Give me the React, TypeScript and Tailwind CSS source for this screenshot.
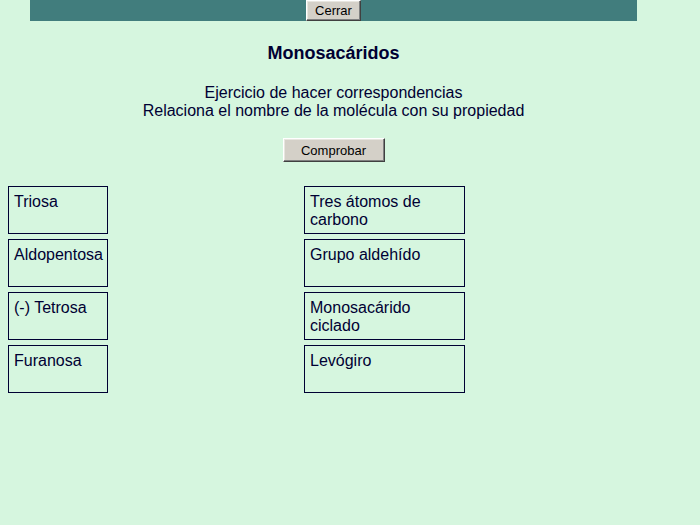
import React from "react";

const pairs: [string, string][] = [
  ["Triosa", "Tres átomos de carbono"],
  ["Aldopentosa", "Grupo aldehído"],
  ["(-) Tetrosa", "Monosacárido ciclado"],
  ["Furanosa", "Levógiro"],
];

const btn =
  "bg-[#d4d0c8] text-black text-[13px] leading-none border border-t-white border-l-white border-r-[#404040] border-b-[#404040] shadow-[inset_-1px_-1px_0_#808080,inset_1px_1px_0_#e8e6e0] flex items-center justify-center";

export default function App() {
  return (
    <div
      className="min-h-[525px] w-[700px] bg-[#d6f6df] text-[#000033]"
      style={{ fontFamily: '"Liberation Sans", Arial, sans-serif' }}
    >
      <div className="ml-[30px] w-[607px] h-[21px] bg-[#417d7d] flex justify-center">
        <button className={`${btn} w-[55px] h-[21px]`}>Cerrar</button>
      </div>
      <div className="ml-[30px] w-[607px] flex flex-col items-center">
        <h1 className="mt-[22px] text-[18px] leading-[21px] font-bold">Monosacáridos</h1>
        <p className="mt-[20px] text-[16px] leading-[18px] text-center">
          Ejercicio de hacer correspondencias
          <br />
          Relaciona el nombre de la molécula con su propiedad
        </p>
        <button className={`${btn} mt-[18px] w-[102px] h-[24px]`}>Comprobar</button>
      </div>
      <div className="mt-[24px] ml-[8px] flex flex-col gap-[5px]">
        {pairs.map(([a, b]) => (
          <div key={a} className="flex">
            <div className="w-[100px] h-[48px] border border-[#000033] pl-[5px] pt-[6px] text-[16px] leading-[18px]">
              {a}
            </div>
            <div className="ml-[196px] w-[161px] h-[48px] border border-[#000033] pl-[5px] pt-[6px] pr-[4px] text-[16px] leading-[18px]">
              {b}
            </div>
          </div>
        ))}
      </div>
    </div>
  );
}
